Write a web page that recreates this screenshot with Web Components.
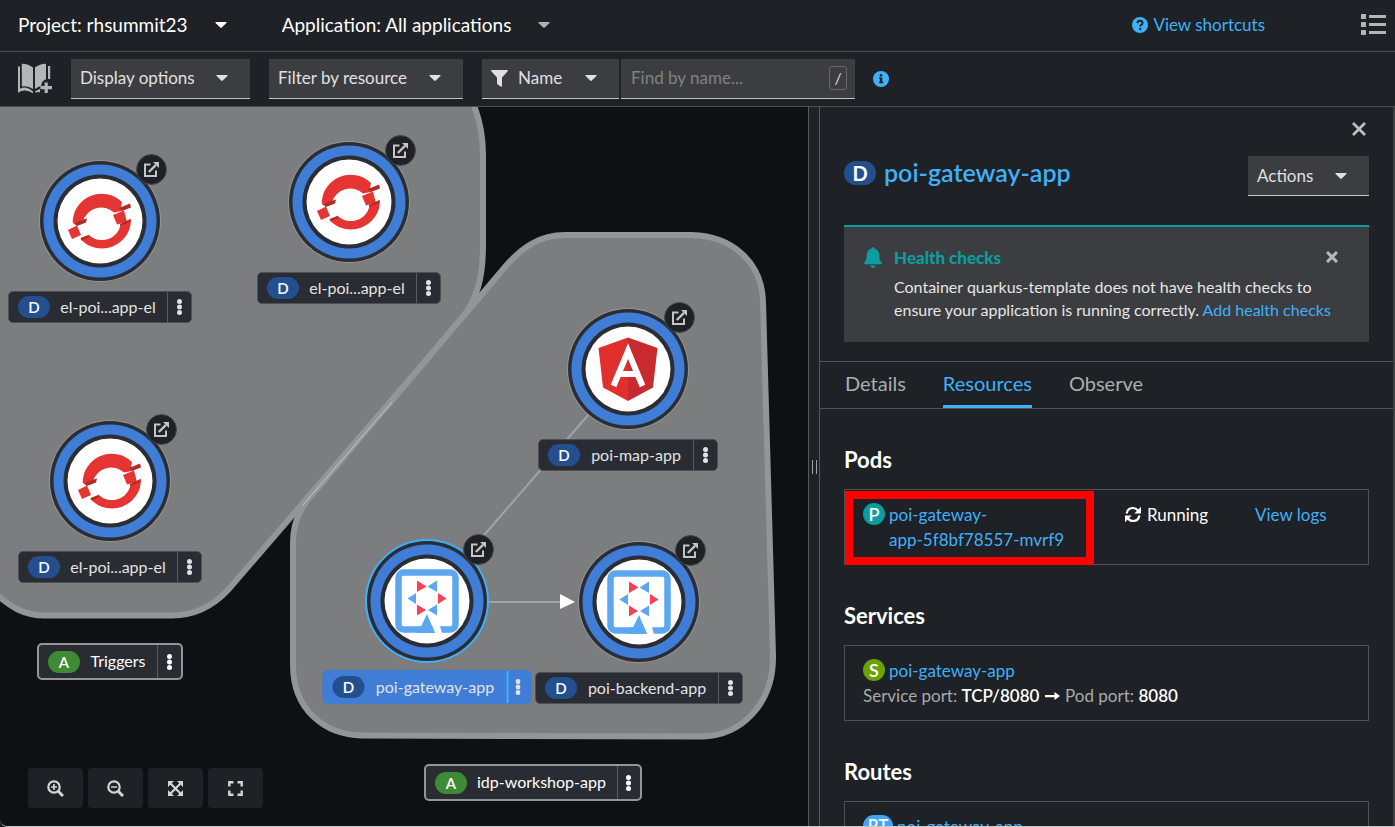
<!DOCTYPE html>
<html lang="en">
<head>
<meta charset="utf-8">
<title>Topology</title>
<style>
  html, body { margin: 0; height: 100%; background: #1e2125; }
  body { font: 16px/24px Lato, "Open Sans", sans-serif; color: #e0e0e0; overflow: hidden; }
</style>
</head>
<body>
<topology-app></topology-app>

<script>
const BLUE = '#41b0fa';

function define(name, css, html) {
  customElements.define(name, class extends HTMLElement {
    constructor() {
      super();
      this.attachShadow({ mode: 'open' });
    }
    connectedCallback() {
      const body = typeof html === 'function' ? html(this) : html;
      this.shadowRoot.innerHTML = `<style>*{box-sizing:border-box}button{display:flex;align-items:center;font:inherit;color:inherit;background:none;border:0;padding:0;margin:0;text-align:left}a{color:${BLUE};text-decoration:none}${css}</style>${body}`;
    }
  });
}

/* ---------- icons ---------- */
const ICONS = {
  caret: [12, 6, '<path fill="currentColor" d="M1 0h10q1.200 0 .4 1L6.800 5.600q-.8.8-1.600 0L.6 1Q-.2 0 1 0z"/>'],
  help: [16, 16, '<circle cx="8" cy="8" r="8" fill="currentColor"/><path d="M5.400 6.200Q5.600 3.800 8 3.800t2.600 2.200Q10.600 7.200 9.200 7.900 8.200 8.400 8.200 9.400" fill="none" stroke="#1e2125" stroke-width="1.900"/><circle cx="8.200" cy="12" r="1.200" fill="#1e2125"/>'],
  info: [16, 16, '<circle cx="8" cy="8" r="8" fill="currentColor"/><path fill="#1e2125" d="M6.800 3.200h2.500v2.300H6.800zM6 6.500h3.300v4.300h1v1.500H6v-1.500h.9V8H6z"/>'],
  list: [25, 21, '<path fill="currentColor" d="M0 0h5v5H0zM8 1h17v3H8zM0 8h5v5H0zM8 9h17v3H8zM0 16h5v5H0zM8 17h17v3H8z"/>'],
  book: [34, 31, '<g fill="currentColor"><path d="M0 3.500h2v22.200Q8 22.500 15 28.500v1.700Q7 25 0 29.800z"/><path d="M3.800.8Q10 .6 15 4.600V26Q10 22.500 3.800 23.500zM17 4.600Q22 .6 28 .8v15.500q-4.500 1.500-4.800 6.500Q19.500 24 17 26z"/><path d="M30 3h2.200v13H30zM17 28.500q2.500-2 5-2.500v3.200h-5z"/><path d="M26.600 19.500h3.200v3.600h4.200v3.200h-4.200V30h-3.200v-3.700h-4.200v-3.200h4.200z"/></g>'],
  filter: [17, 17, '<path fill="currentColor" d="M.8 0h15.400q1 0 .5 1.200L11 7.500v8.300q-.2 1.400-1.400.8L6.300 14Q6 13.700 6 13V7.500L.3 1.200Q-.2 0 .8 0z"/>'],
  close: [14, 14, '<path d="M1 1l12 12M13 1L1 13" stroke="currentColor" stroke-width="2.600"/>'],
  dismiss: [12, 12, '<path d="M1 1l10 10M11 1L1 11" stroke="currentColor" stroke-width="3"/>'],
  bell: [18, 21, '<path fill="currentColor" d="M9 0q1.300 0 1.300 1.500Q15 2.600 15.200 8q.1 5.500 2.600 7.400.5 1.600-1 1.800H1.200q-1.500-.2-1-1.800Q2.700 13.500 2.800 8 3 2.600 7.700 1.500 7.700 0 9 0zM6.300 18.500h5.400Q11 21 9 21t-2.700-2.500z"/>'],
  sync: [16, 17, '<g fill="none" stroke="currentColor" stroke-width="2.200"><path d="M1.600 7.500Q2.600 2 8 2q3.400 0 5.600 3.200"/><path d="M14.400 9.500Q13.400 15 8 15q-3.400 0-5.600-3.200"/></g><path fill="currentColor" d="M16 .8v6.700H9.300zM0 16.200V9.500h6.700z"/>'],
  arrow: [15, 8, '<path fill="currentColor" d="M0 3h9.500V0L15 4 9.500 8V5.200H0z"/>'],
  zoomin: [17, 17, '<g fill="none" stroke="currentColor"><circle cx="7" cy="7" r="5.700" stroke-width="2.200"/><path d="M11 11l5 5" stroke-width="3"/><path d="M4 7h6M7 4v6" stroke-width="1.700"/></g>'],
  zoomout: [17, 17, '<g fill="none" stroke="currentColor"><circle cx="7" cy="7" r="5.700" stroke-width="2.200"/><path d="M11 11l5 5" stroke-width="3"/><path d="M4 7h6" stroke-width="1.700"/></g>'],
  fit: [15, 15, '<path fill="currentColor" d="M0 0h6L0 6zM15 0v6L9 0zM0 15V9l6 6zM15 15H9l6-6z"/><path d="M2 2l11 11M13 2L2 13" stroke="currentColor" stroke-width="2.200"/>'],
  expand: [15, 15, '<path d="M1.300 5.500V1.300h4.200M9.500 1.300h4.200v4.200M13.700 9.500v4.200H9.500M5.500 13.700H1.300V9.500" fill="none" stroke="currentColor" stroke-width="2.400"/>'],
  external: [15, 15, '<path d="M6.500 2.500H1v11.500h11V8.500" fill="none" stroke="currentColor" stroke-width="2"/><path d="M4.800 10L12 2.800" stroke="currentColor" stroke-width="2.400"/><path fill="currentColor" d="M9 0h6v6z"/>'],
  kebab: [5, 16, '<g fill="currentColor"><circle cx="2.500" cy="2.500" r="2.500"/><circle cx="2.500" cy="8" r="2.500"/><circle cx="2.500" cy="13.500" r="2.500"/></g>']
};
define('ui-icon', ':host{display:inline-flex;flex:none}svg{display:block}', el => {
  const [w, h, art] = ICONS[el.getAttribute('name')];
  return `<svg width="${w}" height="${h}" viewBox="0 0 ${w} ${h}" aria-hidden="true">${art}</svg>`;
});

/* ---------- small parts ---------- */
define('kind-badge', `
  :host{display:inline-flex;flex:none;align-items:center;justify-content:center;width:32px;height:22px;border-radius:11px;background:#244f8e;color:#fff;font-size:15px;line-height:22px;font-weight:600}
  :host([kind=app]){background:#3f8a35}
  :host([kind=pod]){width:22px;background:#0b9d9f;font-size:18px}
  :host([kind=service]){width:22px;background:#6ca100;font-size:18px}
  :host([kind=route]){width:30px;background:#41a4f5;font-size:17px}
  :host([size=large]){height:24px;border-radius:12px;font-size:20px;line-height:24px;font-weight:700}`, '<slot></slot>');

define('menu-button', `
  :host{display:inline-block;height:40px}
  button{justify-content:space-between;width:100%;height:100%;gap:12px;padding:0 22px 0 9px;background:#3c3d40;border-bottom:1px solid #c4c5c6;font-size:17px}
  span{display:flex;align-items:center;gap:10px;white-space:nowrap}`,
  '<button type="button" aria-haspopup="true"><span><slot></slot></span><ui-icon name="caret"></ui-icon></button>');

/* ---------- context bar and toolbar ---------- */
define('context-bar', `
  :host{display:flex;align-items:center;height:52px;padding:0 9px 2px 18px;border-bottom:1px solid #4b4d50;box-sizing:border-box;color:#fff}
  .pick{gap:27px;font-size:19px;white-space:nowrap}
  .pick + .pick{margin-left:55px}
  .dim{color:#b0b1b2}
  a{display:flex;align-items:center;gap:5px;margin-left:auto;font-size:17px}
  .list{margin-left:96px;color:#b4b5b6}`, `
  <button class="pick" type="button">Project: rhsummit23 <ui-icon name="caret"></ui-icon></button>
  <button class="pick" type="button">Application: All applications <ui-icon class="dim" name="caret"></ui-icon></button>
  <a href="#shortcuts"><ui-icon name="help"></ui-icon>View shortcuts</a>
  <button class="list" type="button" aria-label="List view"><ui-icon name="list"></ui-icon></button>`);

define('filter-bar', `
  :host{display:flex;align-items:center;height:55px;padding:0 18px 1px;border-bottom:1px solid #4b4d50;box-sizing:border-box}
  .book{width:34px;color:#b4b5b6}
  .display{width:179px;margin-left:19px}
  .resource{width:194px;margin:0 19px}
  .name{width:137px}
  .find{display:flex;align-items:center;width:234px;height:40px;margin-left:2px;padding:0 8px 0 10px;background:#3c3d40;border-bottom:1px solid #c4c5c6}
  input{flex:1;min-width:0;padding:0;border:0;outline:0;background:none;color:#e0e0e0;font:inherit;font-size:17px}
  input::placeholder{color:#818284;opacity:1}
  kbd{width:18px;height:24px;border:1px solid #66686b;border-radius:3px;font:inherit;line-height:22px;text-align:center;color:#d8d8d8}
  .info{margin-left:18px;color:${BLUE}}`, `
  <button class="book" type="button" aria-label="Add to project"><ui-icon name="book"></ui-icon></button>
  <menu-button class="display">Display options</menu-button>
  <menu-button class="resource">Filter by resource</menu-button>
  <menu-button class="name"><ui-icon name="filter"></ui-icon>Name</menu-button>
  <div class="find"><input type="text" placeholder="Find by name..." aria-label="Find by name"><kbd>/</kbd></div>
  <button class="info" type="button" aria-label="Search help"><ui-icon name="info"></ui-icon></button>`);

/* ---------- topology canvas ---------- */
const LOGOS = {
  openshift: `<g fill="#e43532"><path d="M-27.300 2A29 29 0 0 1 22-19l-1 5 1 4-8 1.500A19 19 0 0 0-17 0z"/><path d="M-32 9l9-4.500 4 9.500-9 4z"/><path d="M-19.500 18l9-3.500A19 19 0 0 0 20.500 4L31-2A29 29 0 0 1-19.500 18z"/><path d="M13-6l11-4.500L27 1l-10 2.500z"/></g>
    <g fill="#b42a25"><path d="M-27 2l14-4.500-1 4L-23 5z"/><path d="M19-13l11-4.500 1 4L22-10z"/><path d="M20 3l10.500-5L30 1 20 5z"/><path d="M-19.500 17l9-3.500-1 3-7 3z"/></g>`,
  angular: `<path fill="#e0302e" d="M0-31.500V32l-25-13.500-4.500-39.500z"/><path fill="#c72b30" d="M0-31.500V32l25-13.500L29.500-21z"/>
    <path d="M-14.500 17L0-18 14.500 17M-9 5H9" fill="none" stroke="#fff" stroke-width="6" stroke-miterlimit="10"/>`,
  quarkus: `<rect x="-28.500" y="-28.500" width="57" height="57" rx="5" fill="none" stroke="#5ca7f0" stroke-width="6.500"/>
    <path fill="#fff" d="M0 12L-5 22H12l3 10H8z"/><path fill="#5ca7f0" d="M0 13l8 19h-18v-6.500h4z"/>
    <path fill="#fb4053" d="M-10-20.500v11.500l9.500-5.500zM11-8v11l8.500-5.500zM-10 3.500v11L-1 9z"/><path fill="#5ca7f0" d="M10-20.500v11.500L.5-14.500zM-11-8v11l-8.500-5.500zM10 3.500v11L1 9z"/>`
};
define('node-label', `
  :host{display:flex;align-items:stretch;height:32px;box-sizing:border-box;border-radius:5px;background:#2a2c33;color:#e2e2e2;border:1px solid #4e5055}
  .name{flex:1;padding-left:9px;gap:10px;white-space:nowrap}
  .text{flex:1;text-align:center;padding-right:11px;margin-top:-1px}
  .menu{width:24px;justify-content:center;border-left:1px solid #5a5c60}
  :host([selected]){height:34px;background:#3f7dd6;border-color:#3f7dd6}
  :host([selected]) .menu{border-left:2px solid ${BLUE};padding-right:4px}
  :host([kind=app]){height:37px;border:2px solid #949597;color:#fff}`,
  el => `<button class="name" type="button"><kind-badge kind="${el.getAttribute('kind') || 'deployment'}">${el.getAttribute('kind') === 'app' ? 'A' : 'D'}</kind-badge><span class="text"><slot></slot></span></button><button class="menu" type="button" aria-label="Actions"><ui-icon name="kebab"></ui-icon></button>`);

define('topology-node', `
  :host{position:absolute;width:124px;height:124px}
  svg{display:block}
  .open{position:absolute;left:98px;top:-5px;width:31px;height:31px;justify-content:center;border-radius:50%;background:#1e2125;border:1px solid #46484b;color:#c4c4c4}
  node-label{position:absolute;left:50%;transform:translateX(-50%);top:132px;width:var(--label-width)}
  :host([selected]) node-label{top:131px}`,
  el => {
    const on = el.hasAttribute('selected');
    return `<svg width="124" height="124" viewBox="-62 -62 124 124" role="img" aria-label="Deployment">
      <circle r="${on ? 62 : 61}" fill="${on ? BLUE : '#949597'}"/><circle r="60" fill="#2a2d33"/><circle r="56.500" fill="#3f7dd6"/><circle r="46.500" fill="#2a2d33"/><circle r="42.500" fill="#fff"/>${LOGOS[el.getAttribute('logo')]}</svg>
      <button class="open" type="button" aria-label="Open URL"><ui-icon name="external"></ui-icon></button>
      <node-label ${on ? 'selected' : ''}><slot></slot></node-label>`;
  });

define('topology-canvas', `
  :host{display:block;position:relative;overflow:hidden;background:#0e1114}
  .hulls{position:absolute;inset:0;width:100%;height:100%}
  .app{position:absolute}
  .zoom{position:absolute;left:28px;bottom:18px;display:flex;gap:5px}
  .zoom button{justify-content:center;width:55px;height:40px;border-radius:4px;background:#1e2125;color:#d4d4d2}`, `
  <svg class="hulls" aria-hidden="true"><g transform="translate(0 -107)">
    <g fill="#7c7d7f" stroke="#949597" stroke-width="6">
      <path d="M460 80Q483 112 483 155V245C483 277 478 300 458 323L228 590C213 606 196 615.500 172 615.500H45C25 615.500 10 608-8 590V80z"/>
      <path d="M565 235H692C732 236 762 262 763 302L773 655C774 705 740 736 702 736.500L362 735.500C325 735 293 710 293 665V543C293 522 300 508 311 496L505 267C522 247 540 235 565 235z"/>
    </g>
    <path d="M303 505L392 402" stroke="#c4c5c6"/>
    <g stroke="#a2a3a5" stroke-width="2"><path d="M628 369L427 601"/><path d="M427 602H562"/></g>
    <path fill="#fff" d="M560 594l15 8-15 7z"/>
  </g></svg>
  <topology-node logo="openshift" style="left:38px;top:52px;--label-width:184px">el-poi...app-el</topology-node>
  <topology-node logo="openshift" style="left:287px;top:33px;--label-width:184px">el-poi...app-el</topology-node>
  <topology-node logo="openshift" style="left:48px;top:312px;--label-width:184px">el-poi...app-el</topology-node>
  <topology-node logo="angular" style="left:566px;top:200px;--label-width:180px">poi-map-app</topology-node>
  <topology-node logo="quarkus" selected style="left:365px;top:432px;--label-width:209px">poi-gateway-app</topology-node>
  <topology-node logo="quarkus" style="left:577px;top:433px;--label-width:208px">poi-backend-app</topology-node>
  <node-label class="app" kind="app" style="left:37px;top:536px;width:146px">Triggers</node-label>
  <node-label class="app" kind="app" style="left:424px;top:657px;width:218px">idp-workshop-app</node-label>
  <div class="zoom">
    <button type="button" aria-label="Zoom in"><ui-icon name="zoomin"></ui-icon></button>
    <button type="button" aria-label="Zoom out"><ui-icon name="zoomout"></ui-icon></button>
    <button type="button" aria-label="Fit to screen"><ui-icon name="fit"></ui-icon></button>
    <button type="button" aria-label="Reset view"><ui-icon name="expand"></ui-icon></button>
  </div>`);

/* ---------- details panel ---------- */
define('health-alert', `
  :host{display:flex;height:117px;box-sizing:border-box;padding:19px 31px 0 20px;background:#3c3d40;border-top:2px solid #0b9d9f;color:#e6e6e6}
  .bell{color:#0b9d9f;margin-top:1px}
  .copy{flex:1;margin-left:12px}
  h2{margin:0 0 6px;font-size:17px;line-height:23px;color:#0b9d9f;font-weight:900}
  p{margin:0;line-height:23px;white-space:nowrap}
  .row{display:flex;justify-content:space-between;align-items:flex-start}
  .close{color:#b8b9ba;padding-top:5px}`, `
  <ui-icon class="bell" name="bell"></ui-icon>
  <div class="copy"><div class="row"><h2>Health checks</h2><button class="close" type="button" aria-label="Dismiss"><ui-icon name="dismiss"></ui-icon></button></div>
  <p>Container quarkus-template does not have health checks to<br>ensure your application is running correctly. <a href="#health">Add health checks</a></p></div>`);

define('resource-section', `
  :host{display:block;margin-top:36px}
  h2{margin:0 0 14px;font-size:22px;line-height:30px;font-weight:700;color:#fff}
  .box{position:relative;height:76px;padding:12px 18px;border:1px solid #4f5254;font-size:17px;line-height:25px}`,
  el => `<h2>${el.getAttribute('heading')}</h2><div class="box"><slot></slot></div>`);

define('details-panel', `
  :host{display:block;overflow:hidden;border-left:1px solid #56585b;border-right:2px solid #3d3f42;background:#1e2125;box-sizing:border-box}
  .close{margin:14px 27px 0 auto;height:16px;color:#c0c1c2}
  .title{display:flex;align-items:center;height:40px;margin:19px 24px 29px;gap:8px}
  h1{flex:1;margin:0 0 8px;font-size:25px;line-height:32px;font-weight:600}
  kind-badge[size]{margin-bottom:6px}
  menu-button{width:121px}
  health-alert{margin:0 24px 19px}
  nav{display:flex;gap:37px;height:48px;padding:0 25px;border:solid #4f5254;border-width:1px 0}
  nav a{font-size:20px;line-height:43px;color:#acadae}
  nav a[aria-current]{color:${BLUE};border-bottom:3px solid ${BLUE}}
  main{display:block;margin-top:-1px;padding:1px 24px 0}
  .pod{display:grid;grid-template-columns:262px 130px 1fr;color:#fff}
  .res{display:flex;gap:4px}
  .res kind-badge{margin-top:1px}
  .run{display:flex;align-items:flex-start;gap:6px}
  .run ui-icon{margin-top:4px}
  .mark{position:absolute;left:0;top:1px;width:249px;height:74px;border:8px solid #f00;pointer-events:none}
  .ports{color:#a9aaab}
  .ports b{color:#fff;font-weight:600}
  .ports ui-icon{color:#fff;vertical-align:2px;margin:0 1px}`, `
  <button class="close" type="button" aria-label="Close"><ui-icon name="close"></ui-icon></button>
  <div class="title"><kind-badge size="large">D</kind-badge><h1><a href="#app">poi-gateway-app</a></h1><menu-button>Actions</menu-button></div>
  <health-alert></health-alert>
  <nav><a href="#details">Details</a><a href="#resources" aria-current="page">Resources</a><a href="#observe">Observe</a></nav>
  <main>
    <resource-section heading="Pods">
      <div class="pod"><div class="res"><kind-badge kind="pod">P</kind-badge><a href="#pod">poi-gateway-<br>app-5f8bf78557-mvrf9</a></div>
      <span class="run"><ui-icon name="sync"></ui-icon>Running</span><a href="#logs">View logs</a></div>
      <div class="mark"></div>
    </resource-section>
    <resource-section heading="Services">
      <div class="res"><kind-badge kind="service">S</kind-badge><a href="#service">poi-gateway-app</a></div>
      <div class="ports">Service port: <b>TCP/8080</b> <ui-icon name="arrow"></ui-icon> Pod port: <b>8080</b></div>
    </resource-section>
    <resource-section heading="Routes">
      <div class="res"><kind-badge kind="route">RT</kind-badge><a href="#route">poi-gateway-app</a></div>
    </resource-section>
  </main>`);

define('panel-splitter', `
  :host{display:flex;align-items:center;justify-content:center;background:#1e2125;border-left:1px solid #56585b}
  i{width:5px;height:14px;border:solid #a0a1a2;border-width:0 1px}`, '<i></i>');

define('topology-app', `
  :host{display:grid;grid-template-rows:auto auto minmax(0,1fr);height:100vh;box-sizing:border-box;overflow:hidden;border-bottom:1px solid #c9c9c9;border-bottom-left-radius:8px;background:#1e2125}
  .work{display:grid;grid-template-columns:minmax(0,1fr) 11px 576px;min-height:0}`, `
  <context-bar></context-bar><filter-bar></filter-bar>
  <div class="work"><topology-canvas></topology-canvas><panel-splitter></panel-splitter><details-panel></details-panel></div>`);
</script>
</body>
</html>
